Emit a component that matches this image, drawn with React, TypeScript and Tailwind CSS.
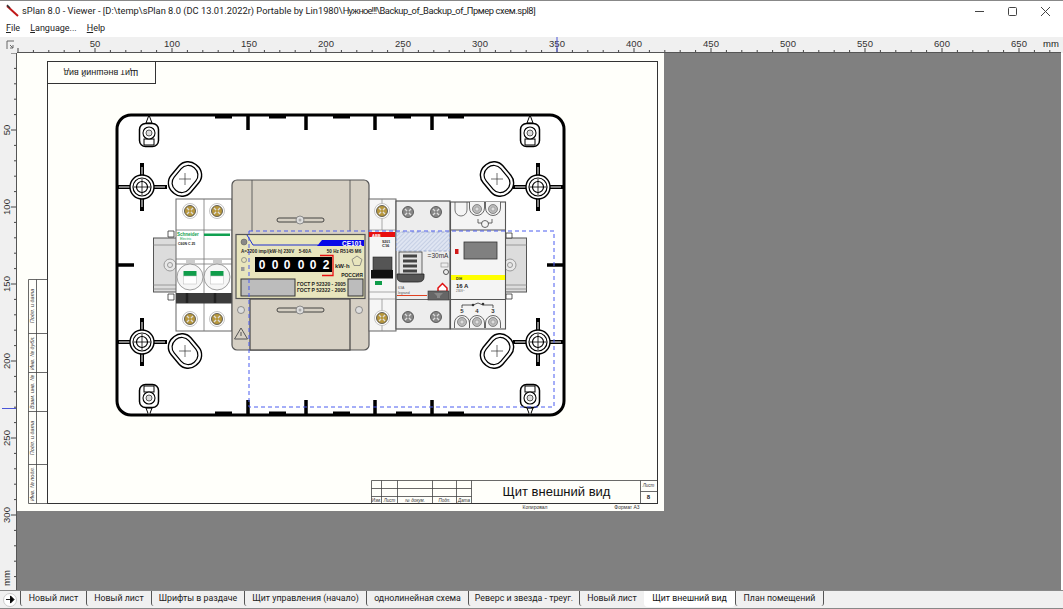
import React from "react";

const tabs = [
  { name: "Новый лист", w: "w-[66px]" },
  { name: "Новый лист", w: "w-[65px]" },
  { name: "Шрифты в раздаче", w: "w-[93px]" },
  { name: "Щит управления (начало)", w: "w-[122px]" },
  { name: "однолинейная схема", w: "w-[102px]" },
  { name: "Реверс и звезда - треуг.", w: "w-[111px]" },
  { name: "Новый лист", w: "w-[65px]" },
  { name: "Щит внешний вид", w: "w-[91px]", active: true },
  { name: "План помещений", w: "w-[89px]" },
];

const marks = [50, 100, 150, 200, 250, 300, 350, 400, 450, 500, 550, 600, 650];
const ticks = Array.from({ length: 68 }, (_, i) => i);

const TopRuler = () => (
  <svg viewBox="0 37 1063 16" className="block h-[16px] w-[1063px] shrink-0 bg-[#f0f0f0]">
    <line x1="17" y1="52.5" x2="1061" y2="52.5" stroke="#555" />
    <path d="M7 41v8M7 41h7M10 45l3 3m0-3v3h-3" fill="none" stroke="#666" />
    {ticks.map((i) => (
      <line key={i} x1={18 + i * 15.4} x2={18 + i * 15.4} y1={i % 5 === 0 ? 48 : 50} y2="52" stroke="#444" />
    ))}
    {marks.map((m) => (
      <text key={m} x={18 + m * 1.54} y="47" textAnchor="middle" fontSize="9.5" fill="#333">
        {m}
      </text>
    ))}
    <line x1="557" y1="37" x2="557" y2="52" stroke="#4a55d8" />
    <text x="1051" y="47" textAnchor="middle" fontSize="9.5" fill="#222">
      mm
    </text>
  </svg>
);

const LeftRuler = () => (
  <svg viewBox="0 53 17 537" className="block h-[537px] w-[17px] shrink-0 bg-[#f0f0f0]">
    <line x1="16.5" y1="53" x2="16.5" y2="590" stroke="#555" />
    {Array.from({ length: 35 }, (_, i) => i).map((i) => (
      <line key={i} y1={53 + i * 15.4} y2={53 + i * 15.4} x1={i % 5 === 0 ? 11 : 14} x2="16" stroke="#444" />
    ))}
    {[50, 100, 150, 200, 250, 300].map((m) => (
      <text
        key={m}
        x="10"
        y={53 + m * 1.54}
        transform={`rotate(-90 10 ${53 + m * 1.54})`}
        textAnchor="middle"
        fontSize="9.5"
        fill="#333"
      >
        {m}
      </text>
    ))}
    <text x="10" y="578" transform="rotate(-90 10 578)" textAnchor="middle" fontSize="9.5" fill="#222">
      mm
    </text>
    <line x1="2" y1="408.5" x2="16" y2="408.5" stroke="#4a55d8" />
  </svg>
);

// brass or grey terminal screw
const Screw = ({ x, y, c = "#b8983e", ring = true }: { x: number; y: number; c?: string; ring?: boolean }) => (
  <g>
    {ring && <circle cx={x} cy={y} r="7.5" fill="#fff" stroke="#aaa" strokeWidth="0.7" />}
    <circle cx={x} cy={y} r="5.5" fill={c} stroke="#444" strokeWidth="0.8" />
    <path d={`M${x - 3} ${y - 3}l6 6m0-6l-6 6`} stroke="#ddd" strokeWidth="1.3" />
    <circle cx={x} cy={y} r="1.4" fill={c} />
  </g>
);

const Target = ({ x, y }: { x: number; y: number }) => (
  <g>
    <path d={`M${x} ${y - 24}v48M${x - 25} ${y}h50`} stroke="#000" strokeWidth="4" />
    <path d={`M${x} ${y - 20}v40M${x - 23} ${y}h46`} stroke="#fff" strokeWidth="1" />
    <circle cx={x} cy={y} r="12" fill="#fff" stroke="#000" strokeWidth="1.4" />
    <circle cx={x} cy={y} r="9" fill="none" stroke="#000" strokeWidth="1.2" />
    <circle cx={x} cy={y} r="5.5" fill="none" stroke="#000" strokeWidth="1.2" />
    <path d={`M${x} ${y - 8}v16M${x - 8} ${y}h16`} stroke="#000" strokeWidth="0.8" />
  </g>
);

const Oval = ({ x, y, a }: { x: number; y: number; a: number }) => (
  <g transform={`rotate(${a} ${x} ${y})`}>
    <rect x={x - 18} y={y - 13} width="36" height="26" rx="12" fill="#fff" stroke="#000" strokeWidth="1.4" />
    <rect x={x - 14.5} y={y - 9.5} width="29" height="19" rx="9" fill="#fff" stroke="#000" strokeWidth="1.2" />
    <path d={`M${x} ${y - 6}v12M${x - 6} ${y}h12`} stroke="#333" strokeWidth="0.7" transform={`rotate(${-a} ${x} ${y})`} />
  </g>
);

const Mount = ({ x, y, flip }: { x: number; y: number; flip?: boolean }) => (
  <g transform={flip ? `translate(0 ${2 * y}) scale(1 -1)` : undefined}>
    <path d={`M${x} ${y - 18}l-3 8h6z`} fill="#fff" stroke="#000" strokeWidth="1" />
    <rect x={x - 9.5} y={y - 9.5} width="19" height="23" rx="6" fill="#fff" stroke="#000" strokeWidth="1.5" />
    <rect x={x - 5} y={y + 6} width="10" height="6" fill="#fff" stroke="#000" strokeWidth="1" />
    <circle cx={x} cy={y} r="6" fill="#fff" stroke="#000" strokeWidth="1.1" />
    <circle cx={x} cy={y} r="3" fill="#ddd" stroke="#333" strokeWidth="0.8" />
  </g>
);

const Slot = ({ y }: { y: number }) => (
  <g>
    <rect x="277" y={y - 2} width="47" height="4" rx="2" fill="#d6d0c4" stroke="#333" strokeWidth="0.9" />
    <circle cx="300" cy={y} r="4" fill="#ddd" stroke="#777" strokeWidth="0.8" />
    <circle cx="300" cy={y} r="1.5" fill="#aaa" />
  </g>
);

// arched terminal, open towards the device edge
const SmallTerm = ({ x, y, flip }: { x: number; y: number; flip?: boolean }) => (
  <g>
    <path
      d={flip ? `M${x - 7.5} ${y - 7}v6a7.5 7.5 0 0 0 15 0v-6` : `M${x - 7.5} ${y + 6}v-5a7.5 7.5 0 0 1 15 0v5`}
      fill="#f4f4f4"
      stroke="#444"
      strokeWidth="0.8"
    />
    <circle cx={x} cy={y} r="4.5" fill="#bbb" stroke="#666" strokeWidth="0.7" />
    <circle cx={x} cy={y} r="2" fill="#ddd" stroke="#888" strokeWidth="0.5" />
  </g>
);

const Drawing = () => (
  <svg viewBox="17 53 647 458" className="block h-full w-full">
    <defs>
      <pattern id="hatch" width="3" height="3" patternUnits="userSpaceOnUse" patternTransform="rotate(45)">
        <rect width="3" height="3" fill="#dfe5f2" />
        <line x1="0" y1="0" x2="0" y2="3" stroke="#b4c0dc" strokeWidth="1.2" />
      </pattern>
    </defs>

    {/* sheet frame */}
    <rect x="47.5" y="61.5" width="610" height="442" fill="none" stroke="#333" />
    <rect x="47.5" y="61.5" width="108" height="22" fill="none" stroke="#333" />
    <text x="101" y="72" transform="rotate(180 101 72)" textAnchor="middle" dominantBaseline="middle" fontSize="9" fill="#222">
      Щит внешний вид
    </text>

    {/* left stamp */}
    <path d="M28.5 279.5H47.5M28.5 333.5H47.5M28.5 372.5H47.5M28.5 411.5H47.5M28.5 464.5H47.5M28.5 503.5H47.5M28.5 279.5V503.5M36.5 279.5V503.5" fill="none" stroke="#444" strokeWidth="0.8" />
    {[
      [306, "Подп. и дата"],
      [353, "Инв. № дубл."],
      [392, "Взам. инв. №"],
      [438, "Подп. и дата"],
      [484, "Инв. № подл."],
    ].map(([y, t]) => (
      <text key={y as number} x="34" y={y as number} transform={`rotate(-90 34 ${y})`} textAnchor="middle" fontSize="5.5" fontStyle="italic" fill="#333">
        {t}
      </text>
    ))}

    {/* title block */}
    <path d="M371.5 480.5H657.5M371.5 480.5V503.5M381.5 480.5V503.5M397.5 480.5V503.5M432.5 480.5V503.5M456.5 480.5V503.5M471.5 480.5V503.5M640.5 480.5V503.5M371.5 488.5H471.5M371.5 496.5H471.5M640.5 491.5H657.5" fill="none" stroke="#444" strokeWidth="0.8" />
    {[
      [376.5, "Изм."],
      [389.5, "Лист"],
      [415, "№ докум."],
      [444.5, "Подп."],
      [464, "Дата"],
    ].map(([x, t]) => (
      <text key={t as string} x={x as number} y="501.5" textAnchor="middle" fontSize="4.5" fontStyle="italic" fill="#333">
        {t}
      </text>
    ))}
    <text x="556.5" y="496" textAnchor="middle" fontSize="13" fill="#111">
      Щит внешний вид
    </text>
    <text x="648.5" y="486.5" textAnchor="middle" fontSize="4.5" fontStyle="italic" fill="#333">
      Лист
    </text>
    <text x="648.5" y="498.5" textAnchor="middle" fontSize="6" fontWeight="bold" fill="#222">
      8
    </text>
    <text x="535" y="509" textAnchor="middle" fontSize="5" fill="#333">
      Копировал
    </text>
    <text x="627" y="509" textAnchor="middle" fontSize="5" fill="#333">
      Формат А3
    </text>

    {/* enclosure */}
    <rect x="117" y="115" width="447" height="300" rx="14" fill="#fff" stroke="#000" strokeWidth="3" />
    <path d="M215 116.5h17M269 116.5h17M333 116.5h17M394 116.5h17M448 116.5h16M215 413.5h17M269 413.5h17M333 413.5h17M396 413.5h16M448 413.5h16" stroke="#000" strokeWidth="4" />
    <path d="M248 115v15M306 115v15M375 115v15M432 115v15M248 415v-15M306 415v-15M375 415v-15M432 415v-15M117 265h17M547 265h17" stroke="#000" strokeWidth="3.5" />

    <Mount x={149} y={133} />
    <Mount x={530} y={133} />
    <Mount x={149} y={398} flip />
    <Mount x={530} y={398} flip />
    <Target x={142} y={187} />
    <Target x={538} y={187} />
    <Target x={142} y={342} />
    <Target x={538} y={342} />
    <Oval x={185} y={179} a={-50} />
    <Oval x={497} y={179} a={50} />
    <Oval x={185} y={351} a={50} />
    <Oval x={497} y={351} a={-50} />

    {/* din rail */}
    <rect x="153.5" y="238" width="23" height="54" fill="#dcdcdc" stroke="#555" />
    <path d="M153.5 245h23M153.5 285h23M153.5 289h23" stroke="#888" strokeWidth="0.8" />
    <circle cx="170" cy="265" r="6" fill="#e8e8e8" stroke="#999" />
    <circle cx="170" cy="265" r="2.5" fill="none" stroke="#999" />
    <path d="M168 231h6v6h-6zM168 294h6v6h-6z" fill="#fff" stroke="#333" strokeWidth="0.8" />
    <rect x="505.5" y="238" width="21" height="54" fill="#dcdcdc" stroke="#555" />
    <path d="M505.5 245h21M505.5 285h21M505.5 289h21" stroke="#888" strokeWidth="0.8" />
    <circle cx="510" cy="265" r="6" fill="#e8e8e8" stroke="#999" />
    <circle cx="510" cy="265" r="2.5" fill="none" stroke="#999" />
    <path d="M506 233h6v5h-6zM506 294h6v5h-6z" fill="#fff" stroke="#333" strokeWidth="0.8" />

    {/* Schneider breaker */}
    <rect x="176" y="199" width="56" height="132" fill="#fff" stroke="#666" />
    <path d="M204 199V331M176 230h56M176 259h56M176 264h56" stroke="#777" strokeWidth="0.8" />
    <Screw x={190} y={211} />
    <Screw x={217} y={211} />
    <text x="177" y="236" fontSize="4.5" fontWeight="bold" fill="#10a050">
      Schneider
    </text>
    <text x="180" y="240" fontSize="3.5" fill="#10a050">
      Electric
    </text>
    <rect x="204" y="233.5" width="26" height="2.5" fill="#10a050" />
    <text x="178" y="245" fontSize="3.5" fontWeight="bold" fill="#222">
      C60N C 25
    </text>
    {[190, 217].map((x) => (
      <g key={x}>
        <circle cx={x} cy="277" r="13" fill="#f6f6f6" stroke="#888" strokeWidth="0.8" />
        <rect x={x - 6.5} y="271" width="13" height="5" fill="#0f9d4a" />
        <rect x={x - 6.5} y="276" width="13" height="8" fill="#fff" stroke="#bbb" strokeWidth="0.5" />
        <rect x={x - 4} y="260" width="9" height="3" fill="#ccc" />
        <Screw x={x} y={319} />
      </g>
    ))}
    <rect x="176" y="293" width="56" height="10.5" fill="#3c3c3c" />
    <path d="M187 293v10M215 293v10" stroke="#222" strokeWidth="2.5" />

    {/* meter body */}
    <rect x="232" y="180" width="137" height="170" rx="5" fill="#d6d0c4" stroke="#555" strokeWidth="1.2" />
    <path d="M252 180V231M350 180V231" stroke="#555" strokeWidth="0.9" />
    <Slot y={220} />
    <rect x="250" y="299" width="100" height="51" fill="#d6d0c4" stroke="#444" strokeWidth="1.2" />
    <Slot y={310} />
    <circle cx="241" cy="310" r="3.5" fill="#ddd" stroke="#777" strokeWidth="0.8" />
    <circle cx="359" cy="310" r="3.5" fill="#ddd" stroke="#777" strokeWidth="0.8" />
    <path d="M241 328l6.5 11h-13z" fill="none" stroke="#555" />
    <path d="M241 332v4" stroke="#555" />

    {/* meter face */}
    <rect x="236" y="234.5" width="129" height="64" fill="#e8e5bd" stroke="#555" strokeWidth="1.2" />
    <circle cx="244" cy="242" r="3" fill="#888" stroke="#555" strokeWidth="0.5" />
    <path d="M247 235l6 10h65" fill="none" stroke="#2030d0" />
    <path d="M322 240h42v6h-47z" fill="#0808e8" />
    <text x="352" y="245.5" textAnchor="middle" fontSize="6.5" fontWeight="bold" fill="#fff">
      CE101
    </text>
    <text x="241" y="253" fontSize="4.6" fontWeight="bold" fill="#222">
      A=3200 imp/(kW·h) 230V
    </text>
    <text x="305" y="253" textAnchor="middle" fontSize="4.6" fontWeight="bold" fill="#222">
      5-60A
    </text>
    <text x="344" y="253" textAnchor="middle" fontSize="4.6" fontWeight="bold" fill="#222">
      50 Hz R5145 M6
    </text>
    <rect x="255" y="257" width="77" height="15" fill="#000" />
    {[262, 275, 287, 301, 313, 326].map((x, i) => (
      <text key={x} x={x} y="269" textAnchor="middle" fontSize="12" fontWeight="bold" fill="#fff">
        {i === 5 ? 2 : 0}
      </text>
    ))}
    <path d="M320 255.5h13v20h-11" fill="none" stroke="#e81010" strokeWidth="1.3" />
    <text x="335" y="267.5" fontSize="6" fontWeight="bold" fill="#222">
      kW·h
    </text>
    <path d="M357 256l5 3.5-2 6h-6l-2-6z" fill="none" stroke="#777" strokeWidth="0.8" />
    <text x="352" y="276.5" textAnchor="middle" fontSize="5" fontWeight="bold" fill="#222">
      РОССИЯ
    </text>
    <circle cx="244" cy="260" r="2.5" fill="none" stroke="#777" strokeWidth="0.7" />
    <rect x="241" y="267" width="3.5" height="4" fill="#999" />
    <rect x="241" y="279" width="54" height="17" fill="#bcbcbc" stroke="#333" strokeWidth="1" />
    <rect x="348" y="279" width="15" height="17" fill="#bcbcbc" stroke="#333" strokeWidth="1" />
    <text x="297" y="286" fontSize="5" fontWeight="bold" fill="#222">
      ГОСТ Р 52320 - 2005
    </text>
    <text x="297" y="292" fontSize="5" fontWeight="bold" fill="#222">
      ГОСТ Р 52322 - 2005
    </text>

    {/* ABB breaker */}
    <rect x="369" y="199" width="27" height="132" fill="#f6f6f6" stroke="#666" />
    <path d="M369 230h27M369 292h27M369 299h27M382 299V331M382 199V230" stroke="#888" strokeWidth="0.7" />
    <Screw x={382} y={211} />
    <Screw x={382} y={318} />
    <rect x="369" y="232" width="26" height="5" fill="#e81010" />
    <text x="372" y="236.5" fontSize="4" fontWeight="bold" fill="#fff">
      ABB
    </text>
    <text x="382" y="243" fontSize="3.5" fontWeight="bold" fill="#222">
      S201
    </text>
    <text x="382" y="247" fontSize="4" fontWeight="bold" fill="#222">
      C16
    </text>
    <rect x="373" y="257" width="19" height="13" fill="#555" stroke="#222" strokeWidth="0.6" />
    <rect x="371" y="270" width="22" height="8.5" fill="#111" />
    <rect x="375" y="281" width="7" height="4" fill="#0f9d4a" />

    {/* RCD */}
    <rect x="396" y="201" width="54" height="128" fill="#ededed" stroke="#555" strokeWidth="1.2" />
    <path d="M396 299.5h54" stroke="#666" />
    <Screw x={408} y={212} c="#888" ring={false} />
    <Screw x={436} y={212} c="#888" ring={false} />
    <Screw x={408} y={317} c="#888" ring={false} />
    <Screw x={436} y={317} c="#888" ring={false} />
    <rect x="396.5" y="232" width="53" height="19" fill="url(#hatch)" stroke="#9aaad0" strokeDasharray="3 2" />
    <rect x="399" y="252" width="23" height="24" fill="#e4e4e4" stroke="#444" strokeWidth="0.8" />
    <path d="M403 256h14M403 261h14M403 266h14M403 271h14" stroke="#444" strokeWidth="3" />
    <path d="M397 274h27v3q0 5-6 5h-15q-6 0-6-5z" fill="#555" stroke="#222" strokeWidth="0.8" />
    <text x="438" y="258" textAnchor="middle" fontSize="6.5" fill="#333">
      =30mA
    </text>
    <rect x="441" y="263" width="7" height="4" fill="none" stroke="#888" strokeWidth="0.6" />
    <circle cx="446" cy="272" r="2.5" fill="none" stroke="#555" strokeWidth="1" />
    <path d="M438 288l4.5-4.5 4.5 4.5v3.5h-9z" fill="#fff" stroke="#e01010" strokeWidth="1.5" />
    <text x="398" y="289" fontSize="3.5" fill="#555">
      63A
    </text>
    <text x="398" y="294" fontSize="3.5" fill="#555">
      legrand
    </text>
    <path d="M397 295.5h30" stroke="#e04020" />
    <rect x="428" y="291" width="21" height="9" fill="#666" stroke="#333" strokeWidth="0.6" />
    <path d="M434 293h9l-3 3v2h-3v-2z" fill="#888" />

    {/* contactor / timer */}
    <rect x="450.5" y="202" width="55" height="127" fill="#f4f4f4" stroke="#555" strokeWidth="1.1" />
    <path d="M450.5 230h55M450.5 299.5h55" stroke="#555" />
    <path d="M455 202v8a6 6 0 0 0 12 0v-8" fill="none" stroke="#555" strokeWidth="0.8" />
    <SmallTerm x={477} y={209} flip />
    <SmallTerm x={493} y={209} flip />
    <path d="M478 219v4h4M492 219v4h-4" fill="none" stroke="#444" strokeWidth="0.8" />
    <circle cx="485" cy="224" r="3.5" fill="none" stroke="#444" strokeWidth="0.8" />
    <rect x="455" y="249" width="3.5" height="5" fill="#d01818" />
    <rect x="464" y="242" width="33" height="17" fill="#808080" stroke="#333" strokeWidth="0.8" />
    <rect x="451" y="275" width="54" height="5" fill="#ffff00" />
    <text x="456" y="279.5" fontSize="3.5" fontWeight="bold" fill="#333">
      DIH
    </text>
    <text x="456" y="287.5" fontSize="6" fontWeight="bold" fill="#222">
      16 A
    </text>
    <text x="456" y="291.5" fontSize="3" fill="#555">
      230V~
    </text>
    <path d="M462 308v-3h11l5-2 5 2h10v3" fill="none" stroke="#333" strokeWidth="0.8" />
    <circle cx="473" cy="305" r="1.3" fill="#333" />
    <circle cx="483" cy="304" r="1.3" fill="#333" />
    {[
      [462, "5"],
      [477, "4"],
      [493, "3"],
    ].map(([x, t]) => (
      <g key={t as string}>
        <text x={x as number} y="313" textAnchor="middle" fontSize="6" fontWeight="bold" fill="#333">
          {t}
        </text>
        <SmallTerm x={x as number} y={322} />
      </g>
    ))}

    {/* selection frame */}
    <rect x="249" y="231" width="305" height="176" fill="none" stroke="#4a5cf0" strokeWidth="1" strokeDasharray="4 3" />
  </svg>
);

const App = () => {
  return (
    <div className="flex h-[609px] w-[1063px] flex-col overflow-hidden bg-white font-['Liberation_Sans',sans-serif] text-[#222]">
      {/* title bar */}
      <div className="flex h-[21px] shrink-0 items-center border-t border-[#888] pl-[6px]">
        <svg viewBox="0 0 14 14" className="h-[14px] w-[14px] shrink-0">
          <path d="M1 2l11 10" stroke="#c01818" strokeWidth="2" />
          <path d="M1 1l3 3" stroke="#333" strokeWidth="1.5" />
        </svg>
        <span className="ml-[2px] whitespace-nowrap font-['Roboto',sans-serif] text-[9.3px]">
          sPlan 8.0 - Viewer - [D:\temp\sPlan 8.0 (DC 13.01.2022r) Portable by Lin1980\
          <span className="tracking-[-0.8px]">Нужное!!!\</span>
          <span className="tracking-[-0.4px]">Backup_of_Backup_of_Прмер схем.spl8]</span>
        </span>
        <div className="ml-auto flex items-center pr-[1px]">
          <div className="flex w-[33px] justify-center">
            <svg viewBox="0 0 9 9" className="h-[9px] w-[9px]">
              <path d="M0 4.5h9" stroke="#444" />
            </svg>
          </div>
          <div className="flex w-[33px] justify-center">
            <svg viewBox="0 0 9 9" className="h-[9px] w-[9px]">
              <rect x="0.5" y="0.5" width="8" height="8" rx="1" fill="none" stroke="#444" />
            </svg>
          </div>
          <div className="flex w-[33px] justify-center">
            <svg viewBox="0 0 9 9" className="h-[9px] w-[9px]">
              <path d="M0 0l9 9M9 0l-9 9" stroke="#444" />
            </svg>
          </div>
        </div>
      </div>

      {/* menu */}
      <div className="flex h-[16px] shrink-0 items-center gap-[10px] pl-[6px] font-['Roboto',sans-serif] text-[9px]">
        <span>
          <u>F</u>ile
        </span>
        <span>
          <u>L</u>anguage...
        </span>
        <span>
          <u>H</u>elp
        </span>
      </div>

      <TopRuler />

      <div className="flex min-h-0 flex-1">
        <LeftRuler />
        <div className="min-w-0 flex-1 bg-[#808080]">
          <div className="h-[458px] w-[647px] bg-[#fffffa]">
            <Drawing />
          </div>
        </div>
        <div className="w-[2px] shrink-0 bg-white" />
      </div>

      {/* sheet tabs */}
      <div className="flex h-[19px] shrink-0 items-start border-t border-b border-[#888] bg-[#f0f0f0] font-['Roboto',sans-serif] text-[8.8px]">
        <div className="flex h-[17px] w-[20px] shrink-0 items-center justify-center">
          <span className="flex h-[14px] w-[14px] items-center justify-center rounded-full border border-[#ccc] bg-white">
            <svg viewBox="0 0 10 10" className="h-[9px] w-[9px]">
              <path d="M0 5h5M5 1l4 4-4 4z" fill="#000" stroke="#000" />
            </svg>
          </span>
        </div>
        {tabs.map((t, i) => (
          <div
            key={i}
            className={
              t.active
                ? `${t.w} flex h-[16px] shrink-0 items-center justify-center rounded-b-[4px] bg-white text-[#111] whitespace-nowrap`
                : `${t.w} flex h-[15px] shrink-0 items-center justify-center rounded-b-[3px] border-l border-[#555] whitespace-nowrap last:border-r`
            }
          >
            {t.name}
          </div>
        ))}
      </div>
    </div>
  );
};

export default App;
